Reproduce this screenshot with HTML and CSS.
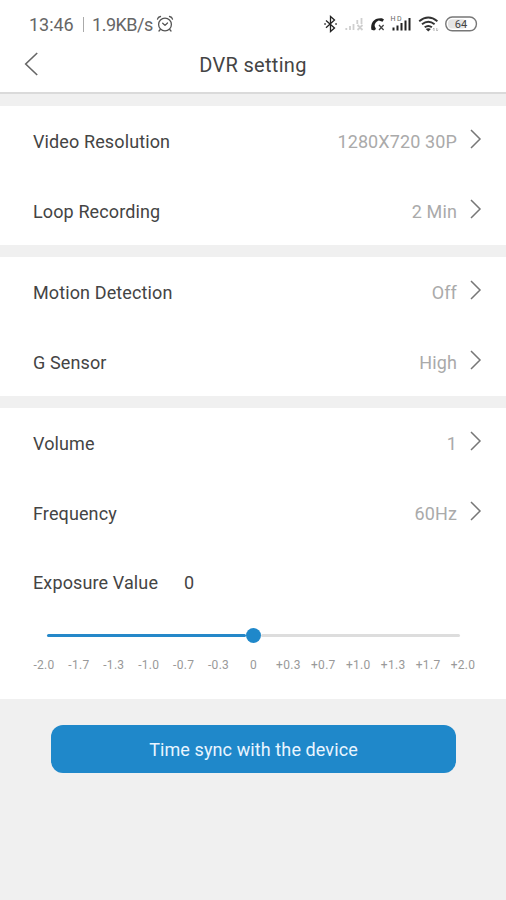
FILE: index.html
```html
<!DOCTYPE html>
<html lang="en">
<head>
<meta charset="utf-8">
<title>DVR setting</title>
<link rel="stylesheet" href="styles.css">
</head>
<body>
<header class="header">
  <div class="status">
    <span class="clock">13:46</span><span class="sep"></span><span class="speed">1.9KB/s</span>
    <svg class="alarm" width="18" height="18" viewBox="0 0 18 18" fill="none" stroke="#555" stroke-width="1.3" stroke-linecap="round" stroke-linejoin="round"><circle cx="9" cy="9.5" r="6.4"/><path d="M1.5 4.2Q2 1.8 4.5 1.5M16.5 4.2Q16 1.8 13.5 1.5M4.3 14.5L3 16M13.7 14.5L15 16M6.7 8.2L9 10.4L11.5 8"/></svg>
    <svg class="tray" width="160" height="24" viewBox="320 12 160 24">
      <path d="M326 20.5L334.5 28L330.5 31.5V16.5L334.5 20L326 27.8" fill="none" stroke="#222" stroke-width="1.3"/><path d="M324.3 24h1.5M335.3 24h1.5" stroke="#222" stroke-width="1.7"/>
      <path d="M346.3 30v-2M350 30v-4M353.5 30v-6M357.3 24v-4M361.5 24v-6M357.5 25l5 5M362.5 25l-5 5" fill="none" stroke="#cfcfcf" stroke-width="1.8"/>
      <path d="M371.4 29.8C370.2 22.5 374 17.5 382 18.2L384 19.6L382.5 21.8L378.8 20.6C376 21.8 374.6 23.6 374.6 26L376 29L374.2 30.5Z" fill="#222"/><path d="M379 25l4.6 5M383.6 25l-4.6 5" stroke="#444" stroke-width="1.3"/>
      <path d="M393.5 30.5v-3M397.5 30.5v-5M401.5 30.5v-7.5M405.5 30.5v-10M409.5 30.5V18" stroke="#222" stroke-width="2"/>
      <text class="hd" x="390.5" y="21.3" textLength="11">HD</text>
      <path d="M419.2 21.2Q428.3 13.8 437.4 21.2M422 24.3Q428.3 19.2 434.6 24.3M424.7 27.3Q428.3 24.5 431.9 27.3" fill="none" stroke="#333" stroke-width="1.9"/><path d="M425.7 29L428.3 31.5L430.9 29Q428.3 27.5 425.7 29Z" fill="#333"/><path d="M434 28v3M432.8 29.2l1.2-1.2M436.8 28v3l1.2-1.2" fill="none" stroke="#aaa" stroke-width=".9"/>
      <rect x="445.8" y="17" width="30.6" height="13.8" rx="6.5" fill="#fff" stroke="#777" stroke-width="1.4"/><rect x="448" y="19.2" width="18" height="9.4" rx="4" fill="#e5e5e5"/>
      <text class="battery" x="454.8" y="28" textLength="12.5">64</text>
    </svg>
  </div>
  <div class="titlebar">
    <svg class="back" width="15" height="24" viewBox="0 0 15 24" fill="none" stroke="#666" stroke-width="1.6"><path d="M13.2 1L1.7 12L13.2 23"/></svg>
    <h1>DVR setting</h1>
  </div>
</header>
<main>
  <section class="group">
    <div class="row"><span class="label">Video Resolution</span><span class="value">1280X720 30P</span><svg class="chevron" viewBox="0 0 12 20"><path d="M1 1L10 10L1 19"/></svg></div>
    <div class="row"><span class="label">Loop Recording</span><span class="value">2 Min</span><svg class="chevron" viewBox="0 0 12 20"><path d="M1 1L10 10L1 19"/></svg></div>
  </section>
  <section class="group">
    <div class="row"><span class="label">Motion Detection</span><span class="value">Off</span><svg class="chevron" viewBox="0 0 12 20"><path d="M1 1L10 10L1 19"/></svg></div>
    <div class="row"><span class="label">G Sensor</span><span class="value">High</span><svg class="chevron" viewBox="0 0 12 20"><path d="M1 1L10 10L1 19"/></svg></div>
  </section>
  <section class="group tall">
    <div class="row"><span class="label">Volume</span><span class="value">1</span><svg class="chevron" viewBox="0 0 12 20"><path d="M1 1L10 10L1 19"/></svg></div>
    <div class="row"><span class="label">Frequency</span><span class="value">60Hz</span><svg class="chevron" viewBox="0 0 12 20"><path d="M1 1L10 10L1 19"/></svg></div>
    <div class="row"><span class="label">Exposure Value</span><span class="exposure">0</span></div>
    <div class="slider"><span class="fill"></span><span class="thumb"></span><span class="rest"></span></div>
    <div class="scale"><span>-2.0</span><span>-1.7</span><span>-1.3</span><span>-1.0</span><span>-0.7</span><span>-0.3</span><span>0</span><span>+0.3</span><span>+0.7</span><span>+1.0</span><span>+1.3</span><span>+1.7</span><span>+2.0</span></div>
  </section>
  <button class="sync">Time sync with the device</button>
</main>
</body>
</html>
```
FILE: styles.css
```css
* { box-sizing: border-box; }
body { margin: 0; min-height: 900px; background: #f0f0f0; color: #444; font-family: Roboto, "Liberation Sans", sans-serif; font-size: 18px; }
.header { height: 94px; background: #fff; border-bottom: 2px solid #dadada; }
.status { display: flex; align-items: center; height: 48px; padding: 0 26px 0 29px; color: #666; }
.clock { letter-spacing: -.05px; }
.speed { letter-spacing: -.5px; }
.sep { width: 1.5px; height: 15px; margin: 0 8px 0 9px; background: #aaa; }
.alarm { margin-left: 3px; }
.tray { margin-left: auto; }
.hd { font-size: 7px; fill: #666; }
.battery { font-size: 11px; fill: #444; }
.titlebar { display: grid; grid-template-columns: 40px 1fr 64px; align-items: center; height: 34px; padding: 0 0 0 24px; }
.back { margin-top: -2px; }
h1 { margin: 0; font-size: 20px; font-weight: 400; text-align: center; letter-spacing: .3px; color: #444; }
.group { height: 139px; margin-top: 12px; background: #fff; }
.tall { height: 291px; }
.row { display: flex; align-items: center; height: 69.5px; padding: 2px 24px 0 33px; }
.label { letter-spacing: .12px; }
.value { margin-left: auto; color: #aaa; letter-spacing: .12px; }
.chevron { width: 12px; height: 20px; margin: 0 0 5px 13px; fill: none; stroke: #777; stroke-width: 1.5; }
.exposure { margin-left: 26px; }
.slider { display: flex; align-items: center; height: 16px; margin: 11px 46px 0 47px; }
.fill, .rest { flex: 1; height: 3px; background: #2588c9; border-radius: 2px; }
.rest { background: #ddd; }
.thumb { width: 15px; height: 15px; border-radius: 50%; background: #1f88ca; }
.scale { display: grid; grid-template-columns: repeat(13, 1fr); margin: 13px 25.5px 0 26.5px; font-size: 12px; line-height: 16px; color: #999; letter-spacing: .3px; text-align: center; }
.sync { display: block; width: 405px; height: 48px; margin: 26px 0 0 51px; padding: 0; border: 0; border-radius: 12px; background: #1f88ca; color: #e9f5ff; font: inherit; letter-spacing: .1px; }
```
